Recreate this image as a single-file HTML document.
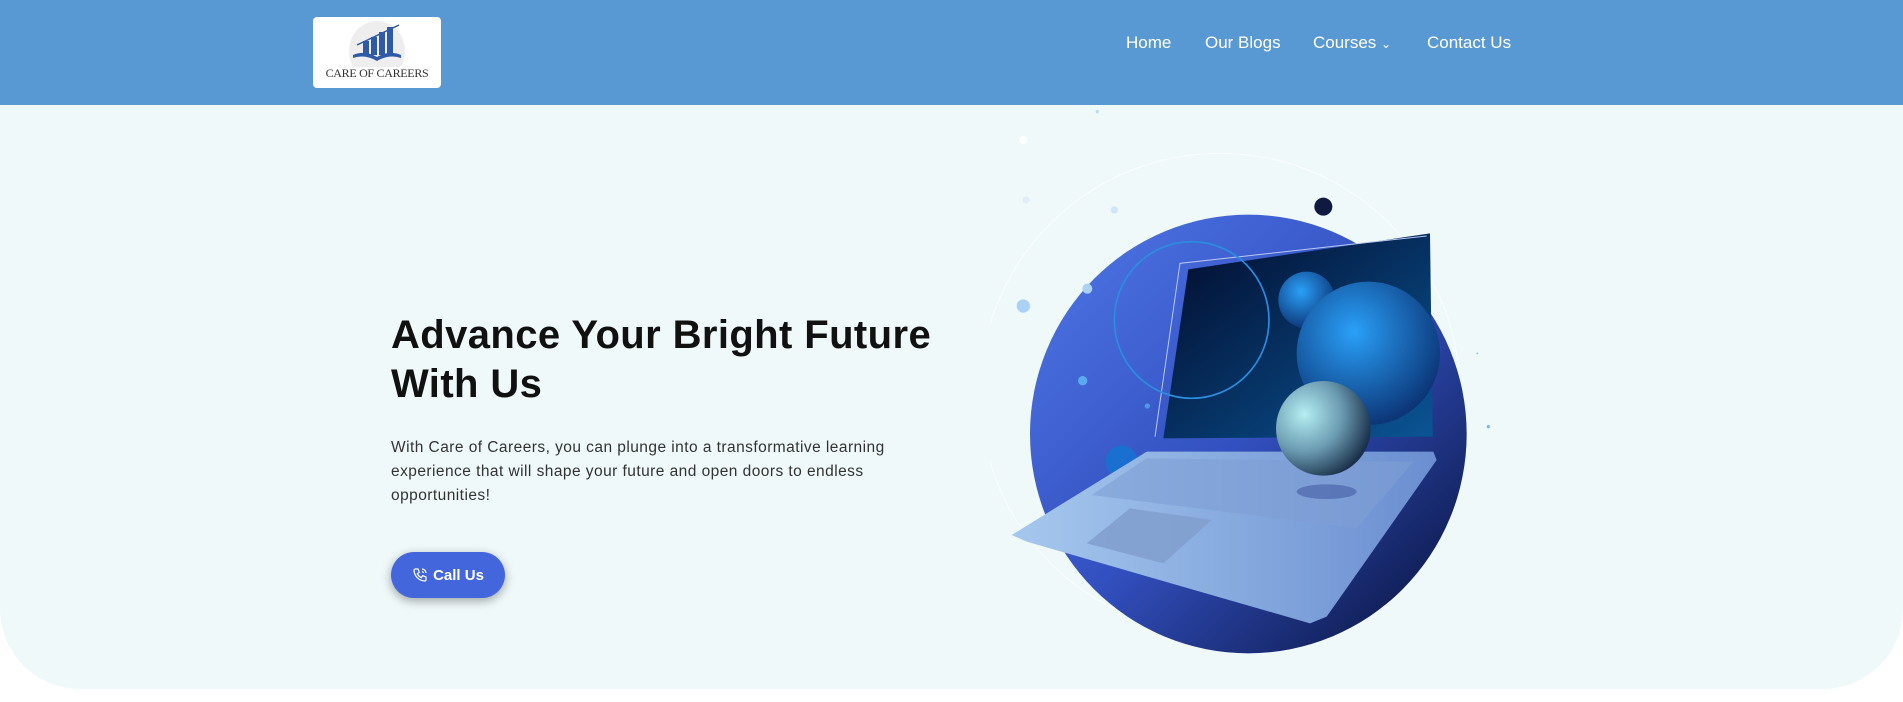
<!DOCTYPE html>
<html><head><meta charset="utf-8"><style>
*{margin:0;padding:0;box-sizing:border-box}
html,body{width:1903px;height:702px;overflow:hidden;background:#fff;font-family:"Liberation Sans",sans-serif}
.hdr{position:absolute;left:0;top:0;width:1903px;height:105px;background:#5898d3}
.logo{position:absolute;left:313px;top:17px;width:128px;height:71px;background:#fff;border-radius:4px;overflow:hidden}
.logo .t{position:absolute;left:0;right:0;top:49px;text-align:center;font-family:"Liberation Serif",serif;font-size:12px;color:#333;letter-spacing:-0.3px}
.nav{position:absolute;top:33px;font-size:17px;color:#fff}
.hero{position:absolute;left:0;top:105px;width:1903px;height:584px;background:#eff9fa;border-radius:0 0 80px 80px}
h1{position:absolute;left:391px;top:311px;font-size:40px;line-height:49px;font-weight:bold;color:#111;letter-spacing:0.4px}
p{position:absolute;left:391px;top:436px;width:540px;font-size:15.5px;line-height:24px;color:#333;letter-spacing:0.45px}
.btn{position:absolute;left:391px;top:552px;width:114px;height:46px;border-radius:23px;background:#4466dd;color:#fff;font-weight:bold;font-size:15px;box-shadow:0 3px 10px rgba(0,0,0,.35);display:flex;align-items:center;justify-content:center;gap:5px}
</style></head><body>
<div class="hdr">
 <div class="logo">
  <svg width="128" height="50" viewBox="0 0 128 50" style="position:absolute;left:0;top:0">
   <ellipse cx="64" cy="34" rx="28" ry="30" fill="#eee"/>
   <rect x="50" y="24" width="6" height="14" fill="#2f5aa8"/><rect x="58" y="20" width="6" height="18" fill="#2f5aa8"/><rect x="66" y="15" width="6" height="23" fill="#2f5aa8"/><rect x="74" y="10" width="6" height="28" fill="#2f5aa8"/>
   <path d="M44 28 L86 8" stroke="#2f5aa8" stroke-width="1.5"/>
   <path d="M40 38 Q52 33 64 40 Q76 33 88 38 L88 41 Q76 37 64 44 Q52 37 40 41Z" fill="#2f5aa8"/>
  </svg>
  <div class="t">CARE OF CAREERS</div>
 </div>
 <div class="nav" style="left:1126px">Home</div>
 <div class="nav" style="left:1205px">Our Blogs</div>
 <div class="nav" style="left:1313px">Courses <span style="font-size:12px">&#8964;</span></div>
 <div class="nav" style="left:1427px">Contact Us</div>
</div>
<div class="hero"></div>
<h1>Advance Your Bright Future<br>With Us</h1>
<p>With Care of Careers, you can plunge into a transformative learning experience that will shape your future and open doors to endless opportunities!</p>
<div class="btn"><svg width="16" height="16" viewBox="0 0 24 24" fill="none" stroke="#fff" stroke-width="1.8"><path d="M5 3h4l2 5-3 2a12 12 0 0 0 6 6l2-3 5 2v4a2 2 0 0 1-2 2A17 17 0 0 1 3 5a2 2 0 0 1 2-2"/><path d="M15 3a6 6 0 0 1 6 6M15 7a2 2 0 0 1 2 2"/></svg>Call Us</div>
<svg style="position:absolute;left:990px;top:105px" width="560" height="580" viewBox="0 -225 1680 1740">
 <defs>
  <linearGradient id="g1" x1="0" y1="0" x2="1" y2="1"><stop offset="0" stop-color="#5078e8"/><stop offset=".5" stop-color="#3350c0"/><stop offset="1" stop-color="#050f35"/></linearGradient>
  <linearGradient id="g2" x1="0" y1="0" x2="1" y2="1"><stop offset="0" stop-color="#020a2a"/><stop offset="1" stop-color="#0a5595"/></linearGradient>
  <radialGradient id="s1" cx=".4" cy=".35" r=".7"><stop offset="0" stop-color="#2aa0f8"/><stop offset="1" stop-color="#0a3070"/></radialGradient>
  <radialGradient id="s2" cx=".3" cy=".35" r=".8"><stop offset="0" stop-color="#b5eef2"/><stop offset=".5" stop-color="#6a9ab0"/><stop offset="1" stop-color="#0a1a35"/></radialGradient>
  <linearGradient id="k" x1="0" y1="0" x2="1" y2="0"><stop offset="0" stop-color="#a6c8ee"/><stop offset="1" stop-color="#6a8ed0"/></linearGradient>
 </defs>
 <circle cx="690" cy="640" r="720" fill="none" stroke="#fff" stroke-width="3" opacity=".7"/>
 <ellipse cx="775" cy="762" rx="655" ry="658" fill="url(#g1)"/>
 <polygon points="595,268 1320,160 1328,770 520,775" fill="url(#g2)"/>
 <path d="M495,770 L570,250 L1310,168" fill="none" stroke="#b8c8f0" stroke-width="3"/>
 <ellipse cx="605" cy="420" rx="232" ry="235" fill="none" stroke="#2a8ee0" stroke-width="5"/>
 <circle cx="950" cy="360" r="85" fill="url(#s1)"/>
 <circle cx="1135" cy="520" r="215" fill="url(#s1)"/>
 <circle cx="395" cy="845" r="48" fill="#1a70d0"/>
 <polygon points="65,1065 470,815 1330,815 1340,840 1010,1310 960,1330 110,1085" fill="url(#k)"/>
 <polygon points="305,945 470,835 1270,845 1100,1045" fill="#7e9fd4" opacity=".6"/>
 <polygon points="290,1090 420,985 665,1020 520,1150" fill="#7f9ccc" opacity=".8"/>
 <ellipse cx="1010" cy="935" rx="90" ry="22" fill="#3a4f9a" opacity=".5"/>
 <circle cx="1000" cy="745" r="142" fill="url(#s2)"/>
 <circle cx="1000" cy="80" r="27" fill="#101a40"/>
 <circle cx="100" cy="378" r="20" fill="#a9d2f5"/><circle cx="292" cy="326" r="15" fill="#a9d2f5"/><circle cx="278" cy="602" r="14" fill="#5aaaf0"/><circle cx="472" cy="678" r="8" fill="#4a9ae8"/><circle cx="373" cy="90" r="11" fill="#cfe5f8"/><circle cx="108" cy="60" r="11" fill="#dfeef8"/><circle cx="1495" cy="740" r="5" fill="#7ab8e8"/><circle cx="1462" cy="520" r="3" fill="#9acbe8"/>
 <circle cx="-70" cy="150" r="22" fill="#fff"/><circle cx="100" cy="-120" r="12" fill="#fff"/><circle cx="322" cy="-205" r="5" fill="#b8dcf0"/>
</svg>
</body></html>
